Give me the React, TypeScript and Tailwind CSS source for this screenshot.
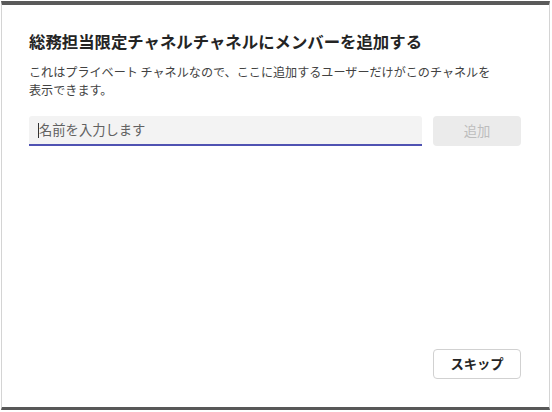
const font = { fontFamily: '"Noto Sans CJK JP", "Noto Sans", sans-serif' };

export default function App() {
  return (
    <div className="w-[552px] h-[412px] bg-white pl-[1px] pt-[1px]" style={font}>
      <div className="w-[549px] h-[409px] flex flex-col border-t-[4px] border-t-[#5a5a5a] border-x border-x-[#d4d4d4] border-b-[3px] border-b-[#585858] px-[27px]">
        <h1 className="mt-[25px] text-[16.4px] leading-[22px] font-bold text-[#242424]">
          総務担当限定チャネルチャネルにメンバーを追加する
        </h1>
        <p className="mt-[11px] text-[12.1px] leading-[18px] text-[#424242]">
          これはプライベート チャネルなので、ここに追加するユーザーだけがこのチャネルを
          <br />
          表示できます。
        </p>
        <div className="mt-[17px] flex gap-[11px]">
          <div className="w-[393px] h-[30px] flex items-center bg-[#f3f3f3] border-b-2 border-b-[#4f52b2] rounded-t-[3px] pl-[9px]">
            <span className="w-px h-[15px] bg-[#333]" />
            <span className="text-[13.3px] text-[#616161]">名前を入力します</span>
          </div>
          <button className="w-[88px] h-[30px] rounded-[4px] bg-[#ebebeb] text-[13.3px] text-[#bdbdbd]">
            追加
          </button>
        </div>
        <div className="flex-1" />
        <div className="flex justify-end mb-[28px] pr-[1px]">
          <button className="w-[88px] h-[30px] rounded-[4px] bg-white border border-[#d1d1d1] text-[13.3px] font-bold text-[#242424]">
            スキップ
          </button>
        </div>
      </div>
    </div>
  );
}
